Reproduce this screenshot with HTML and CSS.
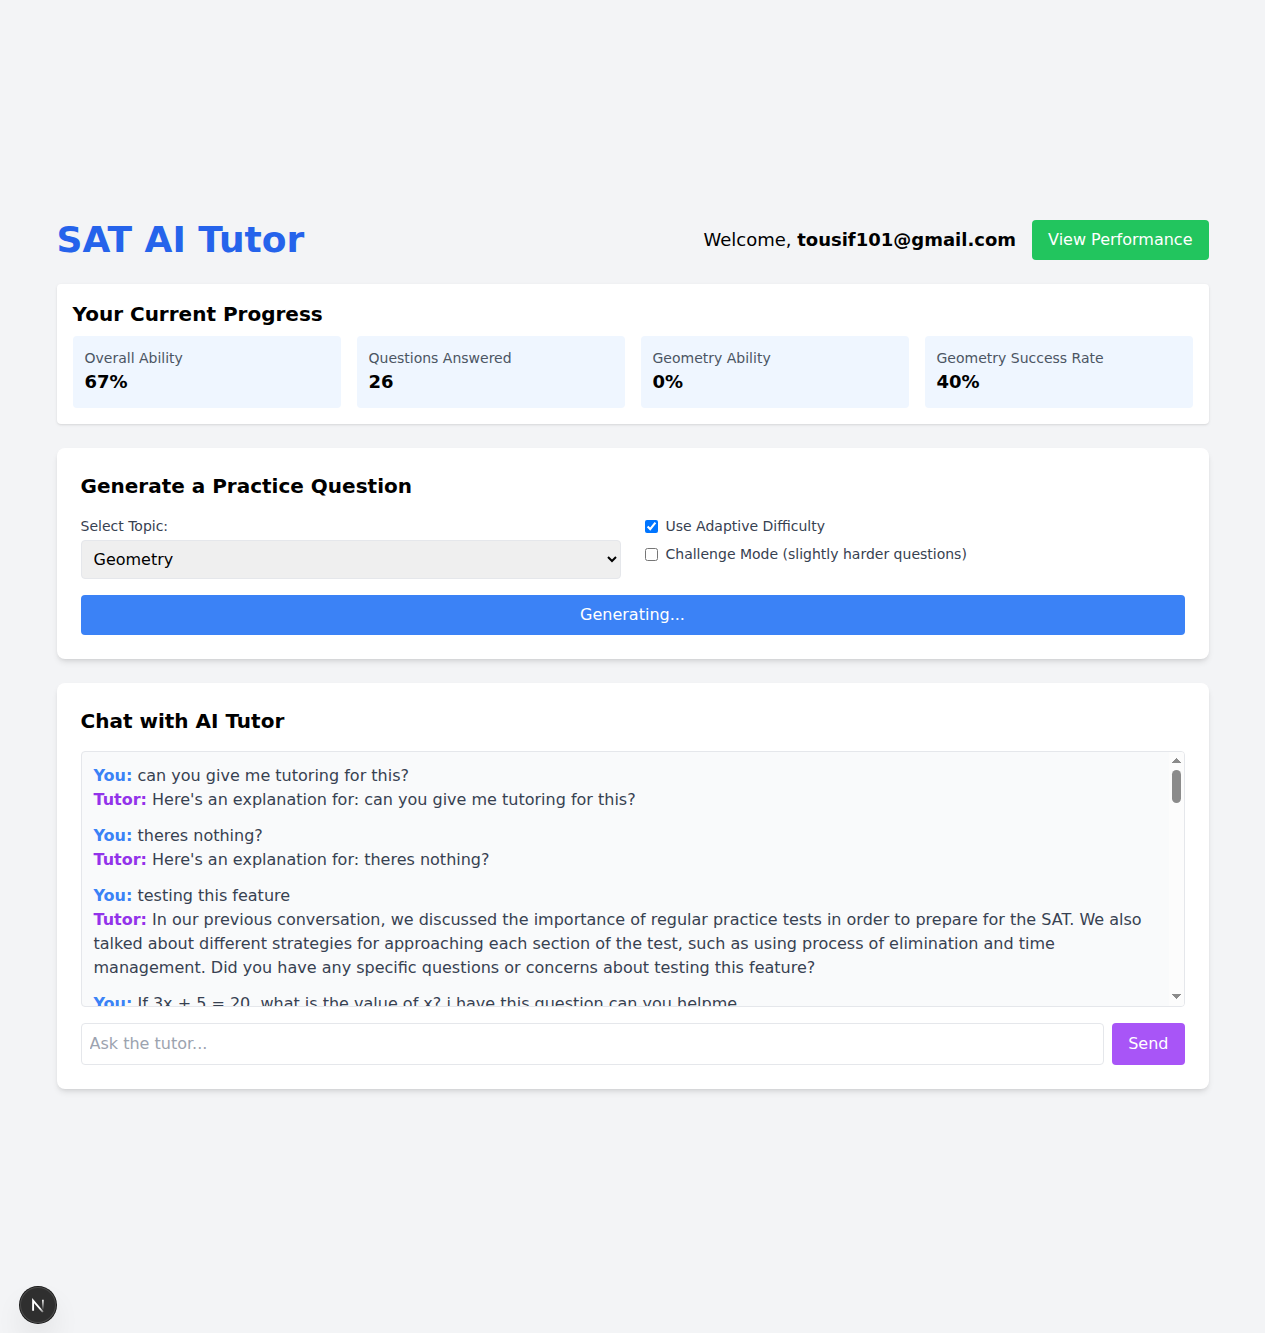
FILE: index.html
```html
<!DOCTYPE html>
<html lang="en">
<head>
<meta charset="utf-8">
<title>SAT AI Tutor</title>
<link rel="stylesheet" href="styles.css">
</head>
<body>
<main class="page">
  <header class="header">
    <h1 class="brand">SAT AI Tutor</h1>
    <div class="account">
      <p class="welcome">Welcome, <strong>tousif101@gmail.com</strong></p>
      <button class="btn btn-green">View Performance</button>
    </div>
  </header>

  <section class="progress">
    <h2 class="heading">Your Current Progress</h2>
    <div class="stats">
      <div class="stat"><p class="stat-label">Overall Ability</p><p class="stat-value">67%</p></div>
      <div class="stat"><p class="stat-label">Questions Answered</p><p class="stat-value">26</p></div>
      <div class="stat"><p class="stat-label">Geometry Ability</p><p class="stat-value">0%</p></div>
      <div class="stat"><p class="stat-label">Geometry Success Rate</p><p class="stat-value">40%</p></div>
    </div>
  </section>

  <section class="card">
    <h2 class="heading">Generate a Practice Question</h2>
    <div class="options">
      <div class="topic">
        <label class="label" for="topic">Select Topic:</label>
        <select class="select" id="topic"><option>Geometry</option></select>
      </div>
      <div class="checks">
        <label class="check"><input class="box" type="checkbox" checked>Use Adaptive Difficulty</label>
        <label class="check"><input class="box" type="checkbox">Challenge Mode (slightly harder questions)</label>
      </div>
    </div>
    <button class="btn btn-blue">Generating...</button>
  </section>

  <section class="card">
    <h2 class="heading">Chat with AI Tutor</h2>
    <div class="chat">
      <div class="messages">
        <div class="exchange">
          <p><strong class="you">You:</strong> can you give me tutoring for this?</p>
          <p><strong class="tutor">Tutor:</strong> Here's an explanation for: can you give me tutoring for this?</p>
        </div>
        <div class="exchange">
          <p><strong class="you">You:</strong> theres nothing?</p>
          <p><strong class="tutor">Tutor:</strong> Here's an explanation for: theres nothing?</p>
        </div>
        <div class="exchange">
          <p><strong class="you">You:</strong> testing this feature</p>
          <p><strong class="tutor">Tutor:</strong> In our previous conversation, we discussed the importance of regular practice tests in order to prepare for the SAT. We also talked about different strategies for approaching each section of the test, such as using process of elimination and time management. Did you have any specific questions or concerns about testing this feature?</p>
        </div>
        <div class="exchange">
          <p><strong class="you">You:</strong> If 3x + 5 = 20, what is the value of x? i have this question can you helpme</p>
        </div>
      </div>
      <div class="scrollbar">
        <svg class="arrow" width="9" height="5" viewBox="0 0 9 5"><path d="M4 0h1v1h1v1h1v1h1v1h1v1H0V4h1V3h1V2h1V1h1z" fill="#8b8b8b"/></svg>
        <div class="thumb"></div>
        <svg class="arrow arrow-down" width="9" height="5" viewBox="0 0 9 5"><path d="M0 0h9v1H8v1H7v1H6v1H5v1H4V4H3V3H2V2H1V1H0z" fill="#8b8b8b"/></svg>
      </div>
    </div>
    <div class="composer">
      <input class="ask" type="text" placeholder="Ask the tutor...">
      <button class="btn btn-purple">Send</button>
    </div>
  </section>
</main>

<div class="dev-badge">
  <svg width="36" height="36" viewBox="0 0 36 36" fill="none">
    <defs>
      <linearGradient id="diag" x1="20.5" y1="21" x2="24" y2="25" gradientUnits="userSpaceOnUse"><stop stop-color="#fff"/><stop offset="1" stop-color="#fff" stop-opacity="0.3"/></linearGradient>
      <linearGradient id="stem" x1="22.5" y1="13" x2="22.5" y2="23" gradientUnits="userSpaceOnUse"><stop stop-color="#fff" stop-opacity="0.9"/><stop offset="1" stop-color="#fff" stop-opacity="0"/></linearGradient>
    </defs>
    <path d="M13.1 23.8V13.6L22.9 25" stroke="url(#diag)" stroke-width="1.9"/>
    <path d="M22.9 12.8v10" stroke="url(#stem)" stroke-width="1.8"/>
  </svg>
</div>
</body>
</html>
```

FILE: styles.css
```css
*, *::before, *::after { box-sizing: border-box; }
body {
  margin: 0;
  min-height: 100vh;
  display: flex;
  align-items: center;
  justify-content: center;
  background: #f3f4f6;
  color: #000;
  font-family: "DejaVu Sans", sans-serif;
  font-size: 16px;
  line-height: 24px;
}
h1, h2, p { margin: 0; }
button, input, select { font: inherit; }

.page { width: 1152px; }
.header {
  display: flex;
  align-items: center;
  justify-content: space-between;
  margin-bottom: 24px;
}
.brand { font-size: 36px; line-height: 40px; font-weight: 700; color: #2563eb; }
.account { display: flex; align-items: center; gap: 16px; }
.welcome { font-size: 18px; line-height: 28px; }

.btn { border: 0; border-radius: 4px; padding: 8px 16px; color: #fff; line-height: 24px; }
.btn-green { background: #22c55e; }
.btn-blue { display: block; width: 100%; background: #3b82f6; }
.btn-purple { background: #a855f7; }

.heading { font-size: 20px; line-height: 28px; font-weight: 600; margin-bottom: 16px; }
.progress {
  background: #fff;
  border-radius: 4px;
  padding: 16px;
  margin-bottom: 24px;
  box-shadow: 0 1px 3px rgba(0, 0, 0, .1), 0 1px 2px -1px rgba(0, 0, 0, .1);
}
.progress .heading { margin-bottom: 8px; }
.stats { display: grid; grid-template-columns: repeat(4, 1fr); gap: 16px; }
.stat { background: #eff6ff; border-radius: 4px; padding: 12px; }
.stat-label { font-size: 14px; line-height: 20px; color: #4b5563; }
.stat-value { font-size: 18px; line-height: 28px; font-weight: 700; }

.card {
  background: #fff;
  border-radius: 8px;
  padding: 24px;
  margin-bottom: 24px;
  box-shadow: 0 4px 6px -1px rgba(0, 0, 0, .1), 0 2px 4px -2px rgba(0, 0, 0, .1);
}
.options { display: grid; grid-template-columns: 1fr 1fr; gap: 24px; margin-bottom: 16px; }
.label { display: block; font-size: 14px; line-height: 20px; color: #374151; margin-bottom: 4px; }
.select {
  display: block;
  width: 100%;
  height: 39px;
  padding: 8px;
  border: 1px solid #e5e7eb;
  border-radius: 4px;
  background-color: #efefef;
  color: #000;
}
.checks { display: flex; flex-direction: column; gap: 8px; }
.check { display: flex; align-items: center; font-size: 14px; line-height: 20px; color: #374151; }
.box { width: 13px; height: 13px; margin: 0 8px 0 0; }

.chat {
  display: flex;
  height: 256px;
  margin-bottom: 16px;
  border: 1px solid #e5e7eb;
  border-radius: 4px;
  background: #f9fafb;
  overflow: hidden;
}
.messages { flex: 1; padding: 12px; color: #374151; overflow: hidden; }
.exchange { margin-bottom: 12px; }
.you { color: #3b82f6; }
.tutor { color: #9333ea; }
.scrollbar {
  width: 15px;
  display: flex;
  flex-direction: column;
  align-items: center;
  padding: 6px 0 7px;
  background: #fcfcfc;
}
.arrow { display: block; }
.thumb { width: 9px; height: 33px; margin-top: 7px; border-radius: 5px; background: #8b8b8b; }
.arrow-down { margin-top: auto; }

.composer { display: flex; gap: 8px; }
.ask {
  flex: 1;
  height: 42px;
  padding: 7px 8px 9px;
  border: 1px solid #e5e7eb;
  border-radius: 4px;
  background: #fff;
}
.ask::placeholder { color: #9ca3af; }

.dev-badge {
  position: fixed;
  left: 20px;
  bottom: 10px;
  width: 36px;
  height: 36px;
  border-radius: 50%;
  background: #2f2f2f;
  box-shadow: 0 0 0 1px #171717, inset 0 0 0 1px #4a4a4a, 0 16px 32px -8px rgba(0, 0, 0, .24);
}
.dev-badge svg { display: block; }
```
